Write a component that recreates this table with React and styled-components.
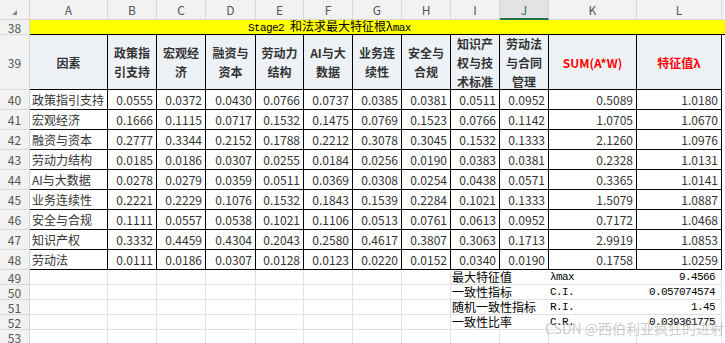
import React from 'react';
import styled, { createGlobalStyle } from 'styled-components';

const GlobalStyle = createGlobalStyle`
  html, body { margin: 0; padding: 0; background: #fff; }
  body { font-family: "Noto Sans CJK SC", "Noto Sans", sans-serif; }
  #root { width: 725px; height: 343px; overflow: hidden; }
`;

const COLS = [78, 49, 49, 50, 48, 49, 49, 49, 49, 49, 88, 85];
const LETTERS = 'ABCDEFGHIJKL'.split('');

const HEADERS = [
  { t: ['因素'] },
  { t: ['政策指', '引支持'] },
  { t: ['宏观经', '济'] },
  { t: ['融资与', '资本'] },
  { t: ['劳动力', '结构'] },
  { t: ['AI与大', '数据'] },
  { t: ['业务连', '续性'] },
  { t: ['安全与', '合规'] },
  { t: ['知识产', '权与技', '术标准'] },
  { t: ['劳动法', '与合同', '管理'] },
  { t: ['SUM(A*W)'], red: true },
  { t: ['特征值λ'], red: true },
];

const ROWS = [
  ['政策指引支持', '0.0555', '0.0372', '0.0430', '0.0766', '0.0737', '0.0385', '0.0381', '0.0511', '0.0952', '0.5089', '1.0180'],
  ['宏观经济', '0.1666', '0.1115', '0.0717', '0.1532', '0.1475', '0.0769', '0.1523', '0.0766', '0.1142', '1.0705', '1.0670'],
  ['融资与资本', '0.2777', '0.3344', '0.2152', '0.1788', '0.2212', '0.3078', '0.3045', '0.1532', '0.1333', '2.1260', '1.0976'],
  ['劳动力结构', '0.0185', '0.0186', '0.0307', '0.0255', '0.0184', '0.0256', '0.0190', '0.0383', '0.0381', '0.2328', '1.0131'],
  ['AI与大数据', '0.0278', '0.0279', '0.0359', '0.0511', '0.0369', '0.0308', '0.0254', '0.0438', '0.0571', '0.3365', '1.0141'],
  ['业务连续性', '0.2221', '0.2229', '0.1076', '0.1532', '0.1843', '0.1539', '0.2284', '0.1021', '0.1333', '1.5079', '1.0887'],
  ['安全与合规', '0.1111', '0.0557', '0.0538', '0.1021', '0.1106', '0.0513', '0.0761', '0.0613', '0.0952', '0.7172', '1.0468'],
  ['知识产权', '0.3332', '0.4459', '0.4304', '0.2043', '0.2580', '0.4617', '0.3807', '0.3063', '0.1713', '2.9919', '1.0853'],
  ['劳动法', '0.0111', '0.0186', '0.0307', '0.0128', '0.0123', '0.0220', '0.0152', '0.0340', '0.0190', '0.1758', '1.0259'],
];

const SUMMARY = [
  ['最大特征值', 'λmax', '9.4566'],
  ['一致性指标', 'C.I.', '0.057074574'],
  ['随机一致性指标', 'R.I.', '1.45'],
  ['一致性比率', 'C.R.', '0.039361775'],
];

const GRID = '#e1e1e1';

const Sheet = styled.div`
  position: relative;
  display: grid;
  grid-template-columns: 30px ${COLS.map((w) => `${w}px`).join(' ')} 3px;
  grid-template-rows: 20px 15px 55px repeat(9, 20px) repeat(5, 15px);
  width: 725px;
  height: 343px;
  overflow: hidden;
  background: #fff;
`;

const Base = styled.div`
  box-sizing: border-box;
  display: flex;
  align-items: center;
  min-width: 0;
  overflow: hidden;
  white-space: nowrap;
`;

const Corner = styled(Base)`
  background: #f2f2f2;
  border-right: 1px solid #d4d4d4;
  border-bottom: 1px solid #d4d4d4;
  align-items: flex-start;
  padding: 10px 0 0 12px;
`;

const Triangle = styled.div`
  width: 0;
  height: 0;
  border-left: 5px solid transparent;
  border-bottom: 5px solid #8a8a8a;
`;

const ColHead = styled(Base)`
  justify-content: center;
  background: ${(p) => (p.$active ? '#e3e3e3' : '#f2f2f2')};
  border-right: 1px solid #d9d9d9;
  border-bottom: ${(p) => (p.$active ? '2px solid #217346' : '1px solid #d4d4d4')};
  color: ${(p) => (p.$active ? '#217346' : '#555')};
  font-size: 12px;
  padding-top: ${(p) => (p.$active ? '1px' : '0')};
`;

const HeadTail = styled(Base)`
  background: #f2f2f2;
  border-bottom: 1px solid #d4d4d4;
`;

const RowHead = styled(Base)`
  justify-content: center;
  background: #f2f2f2;
  border-right: 1px solid #d4d4d4;
  border-bottom: 1px solid #d9d9d9;
  color: #555;
  font-size: 12px;
  line-height: 13px;
  overflow: visible;
`;

const Banner = styled(Base)`
  grid-column: span 13;
  background: #ffff00;
  border-bottom: 1px solid #000;
  padding-left: 218px;
  font-size: 12px;
  line-height: 13px;
  color: #000;
  overflow: visible;
`;

const BannerText = styled.span`
  white-space: pre;
`;

const Mono = styled.span`
  font-family: "Liberation Mono", "DejaVu Sans Mono", monospace;
  font-size: 11px;
  letter-spacing: -0.6px;
  white-space: pre;
`;

const HeadCell = styled(Base)`
  flex-direction: column;
  justify-content: center;
  background: #eef2f7;
  border-right: 1px solid #000;
  border-bottom: 1px solid #000;
  font-size: 12px;
  font-weight: 700;
  line-height: 19px;
  color: ${(p) => (p.$red ? '#ff0000' : '#333')};
`;

const DataCell = styled(Base)`
  justify-content: ${(p) => (p.$left ? 'flex-start' : 'flex-end')};
  padding: ${(p) => (p.$left ? '0 0 0 2px' : '0 3px 0 0')};
  border-right: 1px solid #000;
  border-bottom: 1px solid #000;
  font-size: 12px;
  color: #333;
`;

const Empty = styled(Base)`
  border-right: ${(p) => (p.$noRight ? 'none' : `1px solid ${GRID}`)};
  border-bottom: ${(p) => (p.$noBottom ? 'none' : `1px solid ${GRID}`)};
`;

const SumCell = styled(Base)`
  grid-column: span ${(p) => p.$span || 1};
  align-items: flex-end;
  justify-content: ${(p) => (p.$right ? 'flex-end' : 'flex-start')};
  padding: ${(p) => (p.$right ? '0 6px 0 0' : '0 0 0 1px')};
  border-bottom: 1px solid ${GRID};
  border-right: ${(p) => (p.$edge ? `1px solid ${GRID}` : 'none')};
  font-size: 12px;
  line-height: 14px;
  color: #000;
  overflow: visible;
`;

const Watermark = styled.div`
  position: absolute;
  left: 545px;
  top: 320px;
  font-size: 14px;
  line-height: 16px;
  color: rgba(160, 160, 160, 0.55);
  white-space: nowrap;
  pointer-events: none;
`;

export default function App() {
  return (
    <>
      <GlobalStyle />
      <Sheet>
        <Corner>
          <Triangle />
        </Corner>
        {LETTERS.map((l) => (
          <ColHead key={l} $active={l === 'J'}>
            {l}
          </ColHead>
        ))}
        <HeadTail />

        <RowHead>38</RowHead>
        <Banner>
          <BannerText>
            <Mono>Stage2 </Mono>和法求最大特征根λ<Mono>max</Mono>
          </BannerText>
        </Banner>

        <RowHead>39</RowHead>
        {HEADERS.map((h, i) => (
          <HeadCell key={i} $red={h.red}>
            {h.t.map((line) => (
              <span key={line}>{line}</span>
            ))}
          </HeadCell>
        ))}
        <Empty $noRight $noBottom />

        {ROWS.map((r, ri) => (
          <React.Fragment key={ri}>
            <RowHead>{40 + ri}</RowHead>
            {r.map((v, ci) => (
              <DataCell key={ci} $left={ci === 0}>
                {v}
              </DataCell>
            ))}
            <Empty $noRight $noBottom />
          </React.Fragment>
        ))}

        {SUMMARY.map((s, si) => (
          <React.Fragment key={si}>
            <RowHead>{49 + si}</RowHead>
            {Array.from({ length: 8 }).map((_, k) => (
              <Empty key={k} />
            ))}
            <SumCell $span={2}>{s[0]}</SumCell>
            <SumCell>
              <Mono>{s[1]}</Mono>
            </SumCell>
            <SumCell $right $edge>
              <Mono>{s[2]}</Mono>
            </SumCell>
            <Empty $noRight $noBottom />
          </React.Fragment>
        ))}

        <RowHead>53</RowHead>
        {LETTERS.map((l) => (
          <Empty key={l} />
        ))}
        <Empty $noRight $noBottom />

        <Watermark>CSDN @西伯利亚疯狂的进射</Watermark>
      </Sheet>
    </>
  );
}
